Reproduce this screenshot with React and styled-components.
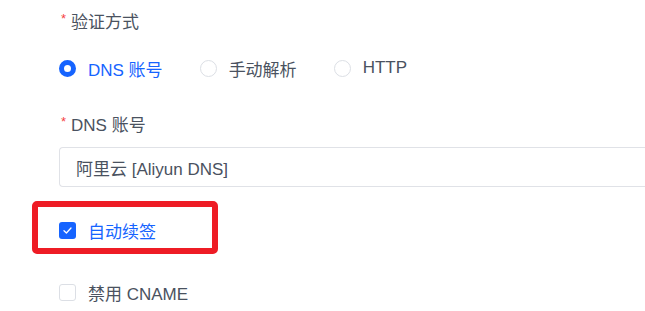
import React from "react";
import styled, { createGlobalStyle } from "styled-components";

const GlobalStyle = createGlobalStyle`
  html, body {
    margin: 0;
    padding: 0;
    background: #ffffff;
    overflow: hidden;
  }
  body {
    font-family: "Liberation Sans", "Noto Sans CJK SC", sans-serif;
  }
`;

const Form = styled.div`
  display: flex;
  flex-direction: column;
  padding-left: 59px;
  overflow: hidden;
`;

const Label = styled.div`
  display: flex;
  align-items: center;
  height: 40px;
  margin-top: ${props => props.top || 0}px;
  font-size: 17px;
  color: #4a5260;
  .star {
    color: #f53f3f;
    font-size: 13px;
    margin: -4px 5px 0 2px;
  }
`;

const RadioGroup = styled.div`
  display: flex;
  align-items: center;
  height: 40px;
  margin-top: 8px;
`;

const RadioItem = styled.label`
  display: flex;
  align-items: center;
  margin-right: ${props => props.gap}px;
  font-size: 17px;
  color: ${props => (props.checked ? "#1664ff" : "#4a5260")};
  .dot {
    box-sizing: border-box;
    width: 17px;
    height: 17px;
    border-radius: 50%;
    border: ${props =>
      props.checked ? "5px solid #1664ff" : "1px solid #dcdfe5"};
    background: #fff;
    margin-right: 12px;
  }
`;

const Input = styled.div`
  box-sizing: border-box;
  display: flex;
  align-items: center;
  height: 40px;
  margin-top: 4px;
  padding-left: 16px;
  border: 1px solid #e0e2e7;
  border-right: none;
  border-radius: 4px 0 0 4px;
  font-size: 17px;
  color: #4a5260;
`;

const Highlight = styled.div`
  position: relative;
  margin-top: ${props => props.top}px;
  &::after {
    content: "";
    position: absolute;
    left: -27px;
    top: -9px;
    width: 186px;
    height: 53px;
    box-sizing: border-box;
    border: 6px solid #ee1c25;
    border-radius: 5px;
  }
`;

const CheckRow = styled.label`
  display: flex;
  align-items: center;
  height: 40px;
  margin-top: ${props => props.top || 0}px;
  font-size: 17px;
  color: ${props => (props.checked ? "#1664ff" : "#4a5260")};
  .box {
    box-sizing: border-box;
    display: flex;
    align-items: center;
    justify-content: center;
    width: 17px;
    height: 17px;
    border-radius: 3px;
    border: ${props => (props.checked ? "none" : "1px solid #dcdfe5")};
    background: ${props => (props.checked ? "#1664ff" : "#fff")};
    margin-right: 12px;
  }
`;

const Check = () => (
  <svg width="11" height="11" viewBox="0 0 11 11" fill="none">
    <path
      d="M2 5.8 L4.4 8 L9 3"
      stroke="#fff"
      strokeWidth="1.3"
      strokeLinecap="round"
      strokeLinejoin="round"
    />
  </svg>
);

export default function App() {
  return (
    <>
      <GlobalStyle />
      <Form>
        <Label>
          <span className="star">*</span>验证方式
        </Label>
        <RadioGroup>
          <RadioItem checked gap={37}>
            <span className="dot" />
            DNS 账号
          </RadioItem>
          <RadioItem gap={37}>
            <span className="dot" />
            手动解析
          </RadioItem>
          <RadioItem gap={0}>
            <span className="dot" />
            HTTP
          </RadioItem>
        </RadioGroup>
        <Label top={15}>
          <span className="star">*</span>DNS 账号
        </Label>
        <Input>阿里云 [Aliyun DNS]</Input>
        <Highlight top={23}>
          <CheckRow checked>
            <span className="box">
              <Check />
            </span>
            自动续签
          </CheckRow>
        </Highlight>
        <CheckRow top={22}>
          <span className="box" />
          禁用 CNAME
        </CheckRow>
      </Form>
    </>
  );
}
